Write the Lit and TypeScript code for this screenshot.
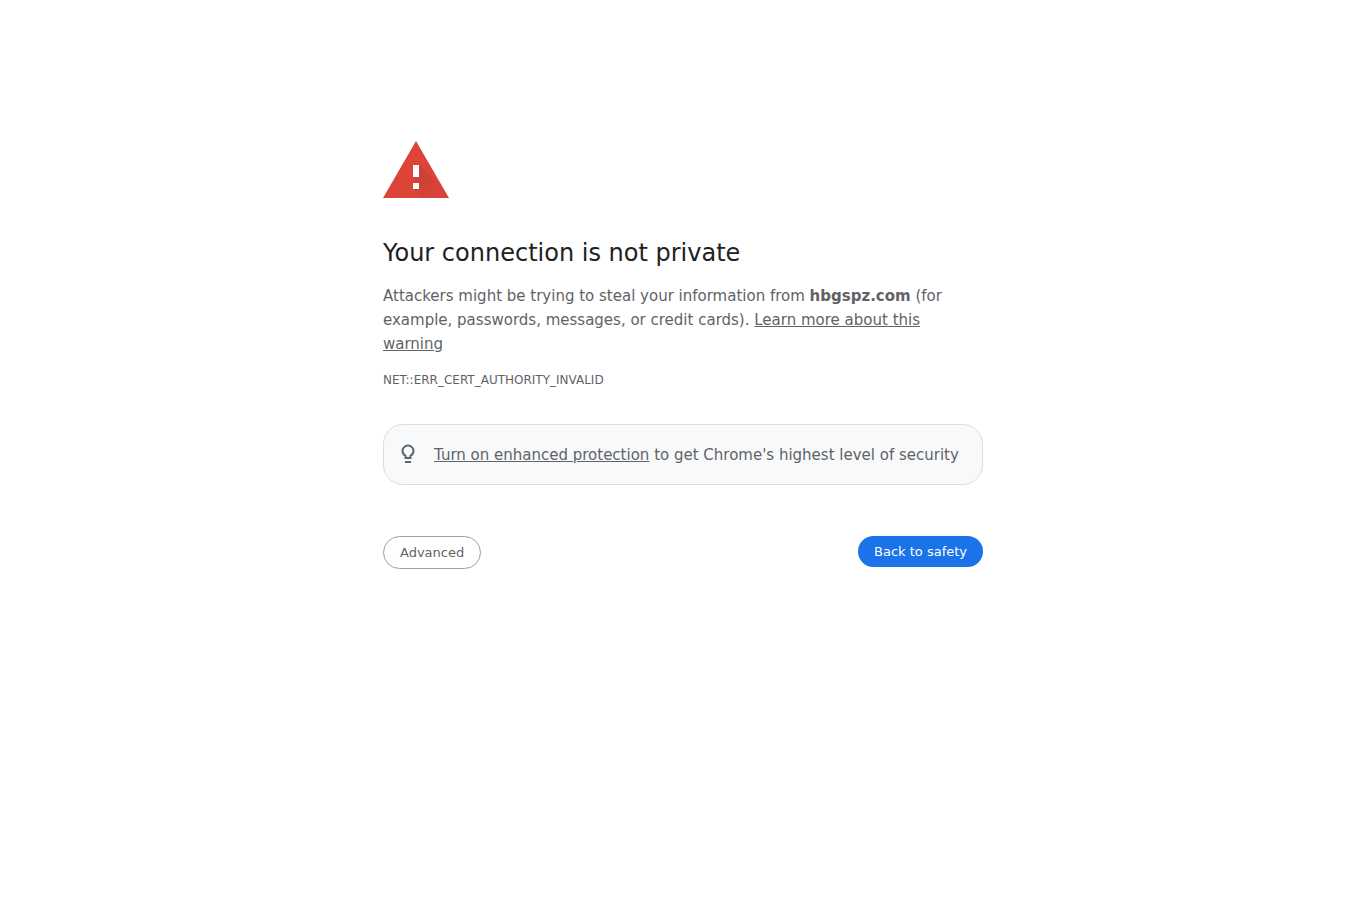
import { LitElement, html, css } from "lit";
import { customElement } from "lit/decorators.js";

@customElement("app-root")
export class AppRoot extends LitElement {
  static styles = css`
    :host {
      display: block;
      min-height: 100vh;
      background: #fff;
      color: #5f6368;
      font-family: "DejaVu Sans", sans-serif;
      font-size: 15px;
      line-height: 24px;
    }
    * {
      box-sizing: border-box;
    }
    main {
      max-width: 600px;
      margin: 0 auto;
      padding-top: 133px;
    }
    .warning-icon {
      display: block;
      width: 72px;
      height: 72px;
      margin: 0 0 33px -3px;
    }
    h1 {
      margin: 0 0 16px;
      color: #202124;
      font-size: 24px;
      font-weight: 500;
      line-height: 30px;
    }
    p {
      margin: 0;
    }
    a {
      color: #5f6368;
      text-decoration: underline;
    }
    .error-code {
      margin-top: 15px;
      font-size: 12px;
      line-height: 18px;
    }
    .tip {
      display: flex;
      align-items: center;
      gap: 16px;
      margin-top: 35px;
      padding: 18px 16px 17px;
      border: 1px solid #dadce0;
      border-radius: 20px;
      background: #f8f9fa;
    }
    .tip svg {
      flex: none;
      width: 18px;
      height: 24px;
    }
    .actions {
      display: flex;
      justify-content: space-between;
      align-items: flex-start;
      margin-top: 51px;
    }
    button {
      padding: 8px 16px;
      border: 0;
      border-radius: 20px;
      font: 13px/15px "DejaVu Sans", sans-serif;
      cursor: pointer;
    }
    .secondary {
      border: 1px solid #9aa0a6;
      background: #fff;
      color: #5f6368;
    }
    .primary {
      background: #1a73e8;
      color: #fff;
    }
  `;

  render() {
    return html`
      <main>
        <svg class="warning-icon" viewBox="0 0 72 72" role="img" aria-label="Warning">
          <defs>
            <linearGradient id="shade" gradientUnits="userSpaceOnUse" x1="33" y1="38" x2="56" y2="61">
              <stop offset="0" stop-color="#262626" stop-opacity=".12" />
              <stop offset="1" stop-color="#262626" stop-opacity=".02" />
            </linearGradient>
            <clipPath id="triangle"><path d="M3 65h66L36 8z" /></clipPath>
          </defs>
          <path fill="#db4437" d="M3 65h66L36 8z" />
          <path clip-path="url(#triangle)" fill="url(#shade)" d="M39 32l33 33H42l-9-9h6v-6l-6-6h6z" />
          <path fill="#fff" d="M33 32h6v12h-6zM33 50h6v6h-6z" />
        </svg>
        <h1>Your connection is not private</h1>
        <p>
          Attackers might be trying to steal your information from
          <strong>hbgspz.com</strong> (for example, passwords, messages, or credit cards).
          <a href="#">Learn more about this warning</a>
        </p>
        <p class="error-code">NET::ERR_CERT_AUTHORITY_INVALID</p>
        <div class="tip">
          <svg viewBox="0 0 18 24" fill="none" stroke="#5f6368" stroke-width="2" aria-hidden="true">
            <path d="M5.500 15v-2.200C3.700 11.700 2.500 10 2.500 8a5.500 5.500 0 0 1 11 0c0 2-1.200 3.700-3 4.800V15z" />
            <path d="M5 19h6" />
          </svg>
          <p><a href="#">Turn on enhanced protection</a> to get Chrome's highest level of security</p>
        </div>
        <div class="actions">
          <button class="secondary" type="button">Advanced</button>
          <button class="primary" type="button">Back to safety</button>
        </div>
      </main>
    `;
  }
}
